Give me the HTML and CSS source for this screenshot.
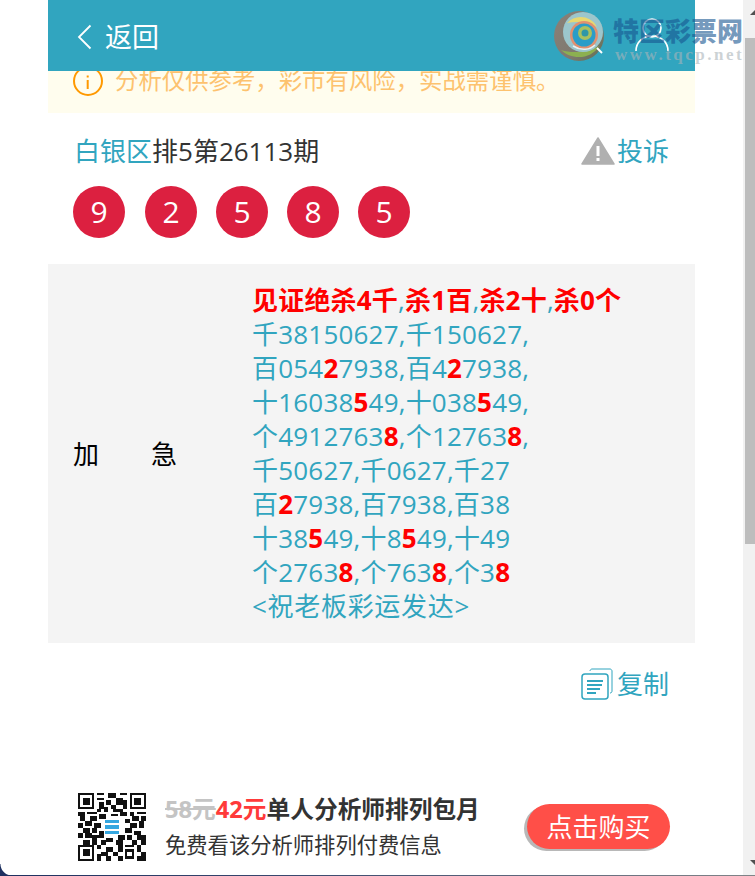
FILE: index.html
```html
<!DOCTYPE html>
<html lang="zh-CN">
<head>
    <meta charset="UTF-8">
    <title>排5第26113期</title>
    <link rel="stylesheet" href="styles.css">
</head>
<body>
    <div class="page">
        <div class="top-bar">
            <div class="back">
                <svg class="back-icon" width="16" height="26" viewBox="0 0 16 26"><path d="M14.500 1.500 3 13l11.500 11.500" fill="none" stroke="#fff" stroke-width="1.800"/></svg>
                <span>返回</span>
            </div>
            <svg class="user-icon" width="36" height="46" viewBox="0 0 36 46"><circle cx="18" cy="10" r="9" fill="none" stroke="#fff" stroke-width="1.600"/><path d="M2 33c0-9 7-15 16-15s16 6 16 15" fill="none" stroke="#fff" stroke-width="1.600"/></svg>
        </div>

        <div class="notice">
            <svg width="30" height="30" viewBox="0 0 30 30"><circle cx="15" cy="15" r="14" fill="none" stroke="#f90" stroke-width="2"/><rect x="13.700" y="14" width="2" height="9" fill="#f90"/><rect x="13.700" y="9.500" width="2" height="2" fill="#f90"/></svg>
            <span>分析仅供参考，彩市有风险，实战需谨慎。</span>
        </div>

        <div class="title-row">
            <div class="title"><span class="teal">白银区</span>排5第26113期</div>
            <div class="complain">
                <svg width="34" height="28" viewBox="0 0 34 28"><path d="M17 1 33 27H1Z" fill="#b0b0b0" stroke="#b0b0b0" stroke-width="1.500" stroke-linejoin="round"/><rect x="15.500" y="9" width="3" height="10" fill="#fff"/><rect x="15.500" y="21" width="3" height="3" fill="#fff"/></svg>
                <span>投诉</span>
            </div>
        </div>

        <div class="balls">
            <span class="ball">9</span>
            <span class="ball">2</span>
            <span class="ball">5</span>
            <span class="ball">8</span>
            <span class="ball">5</span>
        </div>

        <div class="panel">
            <div class="panel-label"><span>加</span><span>急</span></div>
            <div class="panel-text">
                <b>见证绝杀4千</b>,<b>杀1百</b>,<b>杀2十</b>,<b>杀0个</b><br>
                千38150627,千150627,<br>
                百054<b>2</b>7938,百4<b>2</b>7938,<br>
                十16038<b>5</b>49,十038<b>5</b>49,<br>
                个4912763<b>8</b>,个12763<b>8</b>,<br>
                千50627,千0627,千27<br>
                百<b>2</b>7938,百7938,百38<br>
                十38<b>5</b>49,十8<b>5</b>49,十49<br>
                个2763<b>8</b>,个763<b>8</b>,个3<b>8</b><br>
                <span class="wish">&lt;祝老板彩运发达&gt;</span>
            </div>
        </div>

        <div class="copy-row">
            <svg width="32" height="32" viewBox="0 0 32 32" fill="none" stroke="#31a5bf"><path d="M9 3c0-1 1-2 2-2h18c1 0 2 1 2 2v20c0 1-.5 2-2 2" stroke-width="1"/><rect x="1" y="6" width="26" height="25" rx="3" stroke-width="1.500"/><path d="M6 13h16M6 17h15M6 21h13M6 25h9" stroke-width="1.800"/></svg>
            <span>复制</span>
        </div>

        <div class="buy-row">
            <svg class="qr" width="70" height="68" viewBox="0 0 29 29" shape-rendering="crispEdges">
                <path fill="#111" d="M0 0h7v7H0zM22 0h7v7h-7zM0 22h7v7H0z"/>
                <path fill="#fff" d="M1 1h5v5H1zM23 1h5v5h-5zM1 23h5v5H1z"/>
                <path fill="#111" d="M2 2h3v3H2zM24 2h3v3h-3zM2 24h3v3H2z"/>
                <path fill="#111" d="M8 0h3v1H8zM13 0h3v2h-3zM18 0h3v1h-3zM8 2h3v1H8zM12 3h2v2h-2zM16 2h3v3h-3zM19 3h2v2h-2zM9 4h2v3H9zM14 5h2v2h-2zM19 5h2v2h-2zM8 7h2v1H8zM11 6h2v2h-2zM15 7h4v1h-4zM0 8h3v2H0zM4 8h4v1H4zM9 9h3v2H9zM14 9h3v1h-3zM18 8h3v2h-3zM22 8h2v2h-2zM25 8h4v1h-4zM1 10h2v2H1zM5 10h3v2H5zM20 11h2v2h-2zM23 10h3v2h-3zM27 10h2v2h-2zM0 13h2v2H0zM3 12h3v2H3zM7 13h3v2H7zM22 13h3v2h-3zM26 12h2v3h-2zM2 15h3v2H2zM6 15h2v2H6zM9 16h2v2H9zM20 15h3v2h-3zM24 16h3v2h-3zM0 17h2v2H0zM3 17h3v2H3zM6 18h5v1H6zM12 19h3v2h-3zM17 18h3v2h-3zM21 18h2v2h-2zM25 18h4v2h-4zM2 20h3v2H2zM6 19h2v3H6zM10 20h2v2h-2zM16 20h3v2h-3zM23 20h2v2h-2zM27 20h2v2h-2zM8 22h2v2H8zM12 23h3v2h-3zM17 22h2v3h-2zM20 22h4v1h-4zM25 22h2v3h-2zM10 25h3v2h-3zM15 25h2v2h-2zM20 24h4v4h-4zM27 25h2v2h-2zM8 26h2v3H8zM12 27h2v2h-2zM17 27h2v2h-2zM25 27h4v2h-4z"/>
                <path fill="#fff" d="M21 25h2v2h-2zM11 11h7v7h-7z"/>
                <path fill="#35a7e0" d="M11.500 11.500h6v1.500h-6zM11.500 13.700h6v1.500h-6zM11.500 16h6v1.500h-6z"/>
            </svg>
            <div class="buy-info">
                <div class="buy-title"><s>58元</s><em>42元</em>单人分析师排列包月</div>
                <div class="buy-desc">免费看该分析师排列付费信息</div>
            </div>
            <div class="buy-btn">点击购买</div>
        </div>
    </div>

    <!-- site watermark over the header -->
    <div class="watermark">
        <svg width="56" height="56" viewBox="0 0 56 56">
            <defs>
                <linearGradient id="shell" x1="0" y1="0" x2="1" y2="1"><stop offset="0" stop-color="#8a8078"/><stop offset="0.6" stop-color="#7f7a70"/><stop offset="1" stop-color="#5f6f50"/></linearGradient>
            </defs>
            <circle cx="26" cy="28" r="25" fill="url(#shell)"/>
            <path d="M8 42c10 10 30 10 38-4-10 6-26 8-38 4Z" fill="#8cb050"/>
            <circle cx="30" cy="24" r="20" fill="#9cc6cc"/>
            <path d="M14 15c8-9 24-8 30 4-8-5-20-6-30-4Z" fill="#e8d870"/>
            <circle cx="31" cy="27" r="14" fill="#e09070"/>
            <circle cx="31" cy="27" r="11.500" fill="#2a9dc8"/>
            <circle cx="32" cy="25" r="7" fill="#a8c060"/>
            <circle cx="32" cy="25" r="3.500" fill="#2f97a8"/>
            <path d="M20 38c8 5 17 4 22-1" fill="none" stroke="#e8f2f2" stroke-width="1.500"/>
            <path d="M44 40l5 5" stroke="#fff" stroke-width="2"/>
        </svg>
        <div class="watermark-text">
            <div class="watermark-name">特区彩票网</div>
            <div class="watermark-url">www.tqcp.net</div>
        </div>
    </div>

    <div class="scrollbar">
        <span class="arrow-up"></span>
        <span class="thumb"></span>
        <span class="arrow-down"></span>
    </div>
    <div class="frame-line"></div>
    <div class="frame-corner"></div>
</body>
</html>
```

FILE: styles.css
```css
* {
    box-sizing: border-box;
}
html, body {
    height: 100%;
}
body {
    margin: 0;
    background: #fff;
    color: #333;
    font-family: "Open Sans", "Noto Sans CJK SC", sans-serif;
    overflow: hidden;
    position: relative;
    font-size: 26px;
}
b, em {
    font-style: normal;
}
.teal {
    color: #31a5bf;
}
.page {
    width: 647px;
    margin-left: 48px;
}
.top-bar {
    position: relative;
    z-index: 1;
    height: 71px;
    background: #31a5bf;
    display: flex;
    align-items: center;
    justify-content: space-between;
    padding: 3px 25px 0 28px;
    color: #fff;
    font-size: 27px;
}
.back {
    display: flex;
    align-items: center;
    gap: 13px;
    line-height: 36px;
}
.user-icon {
    margin-top: 7px;
}
.notice {
    height: 42px;
    background: #fffdee;
    display: flex;
    align-items: flex-start;
    gap: 12px;
    padding: 0 25px;
    color: #fdc26e;
    font-size: 23.400px;
    line-height: 22px;
}
.notice span {
    margin-top: -2px;
    white-space: nowrap;
}
.notice svg {
    margin-top: -5px;
    flex: none;
}
.title-row {
    display: flex;
    justify-content: space-between;
    align-items: center;
    padding: 2px 26px 0 26px;
    height: 73px;
}
.title {
    line-height: 36px;
}
.complain {
    display: flex;
    align-items: center;
    gap: 2px;
    color: #31a5bf;
    line-height: 36px;
}
.balls {
    display: flex;
    gap: 19px;
    padding-left: 25px;
}
.ball {
    width: 52px;
    height: 52px;
    border-radius: 50%;
    background: #dc2040;
    color: #fff;
    text-align: center;
    line-height: 52px;
    font-size: 30px;
}
.ball:first-child {
    margin-right: 1px;
}
.panel {
    margin-top: 26px;
    height: 379px;
    background: #f4f4f4;
    display: flex;
    align-items: center;
    padding: 0 0 2px 25px;
}
.panel-label {
    width: 179px;
    display: flex;
    gap: 52px;
    color: #000;
}
.panel-text {
    color: #31a5bf;
    line-height: 34px;
    letter-spacing: 0.2px;
}
.panel-text b {
    color: #f00;
    font-weight: 700;
}
.wish {
    letter-spacing: 0.700px;
}
.copy-row {
    display: flex;
    justify-content: flex-end;
    align-items: center;
    gap: 4px;
    padding: 23px 26px 0 0;
    color: #31a5bf;
    line-height: 36px;
}
.buy-row {
    display: flex;
    align-items: center;
    margin-top: 88px;
    padding-left: 29px;
}
.qr {
    flex: none;
}
.buy-info {
    margin-left: 18px;
    width: 362px;
    padding-top: 3px;
}
.buy-title {
    font-size: 23.700px;
    font-weight: 700;
    line-height: 32px;
}
.buy-title s {
    color: #c4c4c4;
}
.buy-title em {
    color: #ff3a3a;
}
.buy-desc {
    font-size: 21.300px;
    line-height: 36px;
    margin-top: 2px;
}
.buy-btn {
    width: 143px;
    height: 45px;
    border-radius: 23px;
    background: #ff4f48;
    color: #fff;
    text-align: center;
    line-height: 46px;
    box-shadow: -3px 2px 0 #b8b8b8;
}
.watermark {
    position: absolute;
    z-index: 2;
    top: 8px;
    left: 553px;
    display: flex;
    gap: 4px;
    pointer-events: none;
}
.watermark-name {
    font-size: 26px;
    font-weight: 900;
    line-height: 30px;
    margin-top: 8px;
    color: rgba(23, 85, 145, 0.6);
    white-space: nowrap;
}
.watermark-url {
    font-family: "Liberation Serif", serif;
    font-size: 17px;
    font-weight: 700;
    letter-spacing: 2.500px;
    line-height: 18px;
    margin-left: 2px;
    color: rgba(170, 180, 185, 0.6);
    white-space: nowrap;
}
.scrollbar {
    position: absolute;
    z-index: 2;
    top: 0;
    right: 0;
    width: 12px;
    height: 875px;
    background: #f1f1f1;
    overflow: hidden;
}
.thumb {
    display: block;
    width: 10px;
    height: 506px;
    margin: 38px 0 0 2px;
    background: #bdbdbd;
}
.arrow-up, .arrow-down {
    position: absolute;
    left: 7px;
    width: 0;
    height: 0;
    border-left: 5px solid transparent;
    border-right: 5px solid transparent;
}
.arrow-up {
    top: 10px;
    border-bottom: 5px solid #505050;
}
.arrow-down {
    bottom: 10px;
    border-top: 5px solid #505050;
}
.frame-line {
    position: absolute;
    z-index: 3;
    left: 0;
    right: 0;
    bottom: 0;
    height: 1px;
    background: linear-gradient(to right, #1e3060, #3a4a70 40%, #808488);
}
.frame-corner {
    position: absolute;
    z-index: 3;
    left: 0;
    bottom: 0;
    width: 12px;
    height: 12px;
    background: radial-gradient(circle at top right, transparent 11px, #1e3060 12px);
}
```
